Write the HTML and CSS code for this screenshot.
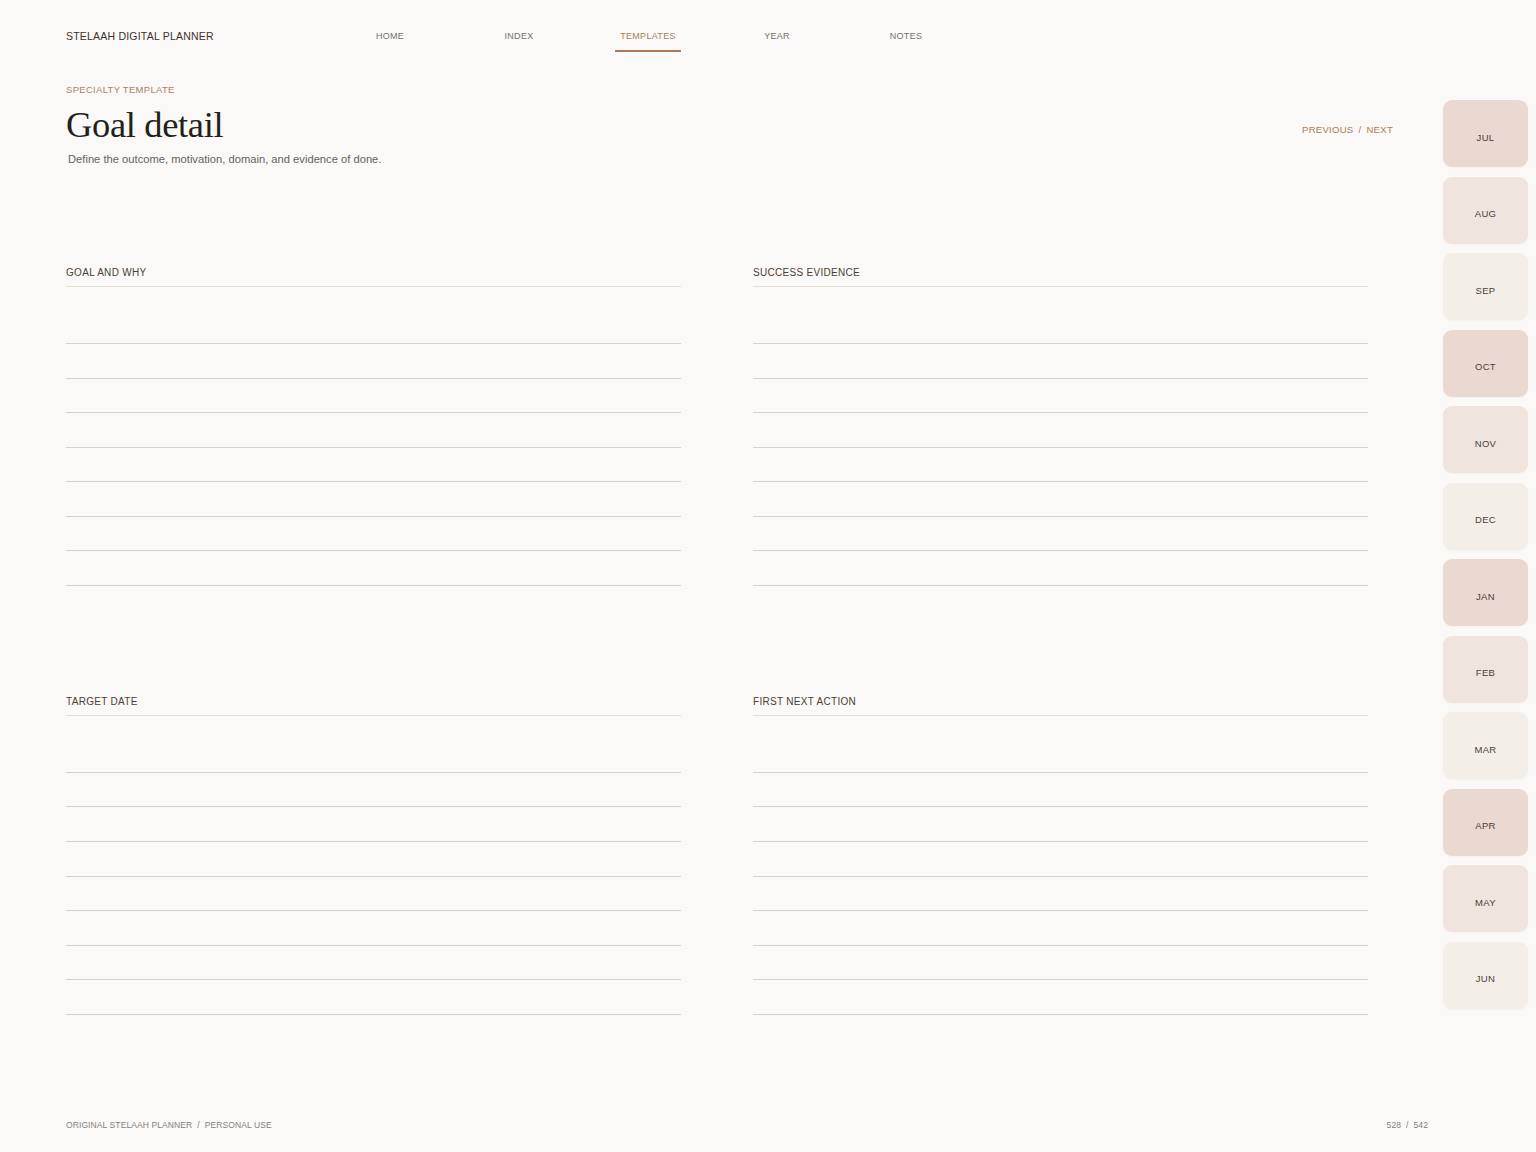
FILE: index.html
```html
<!DOCTYPE html>
<html lang="en">
<head>
<meta charset="utf-8">
<title>Goal detail — Stelaah Digital Planner</title>
<link rel="stylesheet" href="styles.css">
</head>
<body>
<div class="page">
  <main class="main">
    <header class="topbar">
      <div class="brand">STELAAH DIGITAL PLANNER</div>
      <nav class="nav">
        <a class="nav-link">HOME</a>
        <a class="nav-link">INDEX</a>
        <a class="nav-link active">TEMPLATES</a>
        <a class="nav-link">YEAR</a>
        <a class="nav-link">NOTES</a>
      </nav>
    </header>

    <section class="intro">
      <div class="intro-text">
        <div class="eyebrow">SPECIALTY TEMPLATE</div>
        <h1 class="title">Goal detail</h1>
        <p class="subtitle">Define the outcome, motivation, domain, and evidence of done.</p>
      </div>
      <div class="pager"><span>PREVIOUS</span><span class="sep">/</span><span>NEXT</span></div>
    </section>

    <section class="grid">
      <div class="block">
        <div class="block-label">GOAL AND WHY</div>
        <div class="lines">
          <div class="line"></div><div class="line"></div><div class="line"></div><div class="line"></div>
          <div class="line"></div><div class="line"></div><div class="line"></div><div class="line"></div>
        </div>
      </div>
      <div class="block">
        <div class="block-label">SUCCESS EVIDENCE</div>
        <div class="lines">
          <div class="line"></div><div class="line"></div><div class="line"></div><div class="line"></div>
          <div class="line"></div><div class="line"></div><div class="line"></div><div class="line"></div>
        </div>
      </div>
      <div class="block">
        <div class="block-label">TARGET DATE</div>
        <div class="lines">
          <div class="line"></div><div class="line"></div><div class="line"></div><div class="line"></div>
          <div class="line"></div><div class="line"></div><div class="line"></div><div class="line"></div>
        </div>
      </div>
      <div class="block">
        <div class="block-label">FIRST NEXT ACTION</div>
        <div class="lines">
          <div class="line"></div><div class="line"></div><div class="line"></div><div class="line"></div>
          <div class="line"></div><div class="line"></div><div class="line"></div><div class="line"></div>
        </div>
      </div>
    </section>

    <footer class="footer">
      <div>ORIGINAL STELAAH PLANNER<span class="sep">/</span>PERSONAL USE</div>
      <div>528<span class="sep">/</span>542</div>
    </footer>
  </main>

  <aside class="tabs">
    <a class="tab tone-a">JUL</a>
    <a class="tab tone-b">AUG</a>
    <a class="tab tone-c">SEP</a>
    <a class="tab tone-a">OCT</a>
    <a class="tab tone-b">NOV</a>
    <a class="tab tone-c">DEC</a>
    <a class="tab tone-a">JAN</a>
    <a class="tab tone-b">FEB</a>
    <a class="tab tone-c">MAR</a>
    <a class="tab tone-a">APR</a>
    <a class="tab tone-b">MAY</a>
    <a class="tab tone-c">JUN</a>
  </aside>
</div>
</body>
</html>
```

FILE: styles.css
```css
* { box-sizing: border-box; }

html, body {
  margin: 0;
  padding: 0;
  background: #fbf9f7;
}

body {
  font-family: "Liberation Sans", Arial, sans-serif;
  color: #3f3530;
}

.page {
  display: flex;
  width: 1536px;
  min-height: 1152px;
}

.main {
  width: 1443px;
  padding: 0 15px 0 66px;
  display: flex;
  flex-direction: column;
  min-height: 1152px;
}

/* top bar */
.topbar {
  display: flex;
  align-items: flex-start;
  padding-top: 30px;
}

.brand {
  font-size: 10.5px;
  line-height: 13px;
  letter-spacing: 0.02em;
  color: #3d322c;
  width: 259.5px;
}

.nav {
  display: grid;
  grid-template-columns: repeat(5, 129px);
  justify-items: center;
}

.nav-link {
  font-size: 9px;
  line-height: 13px;
  letter-spacing: 0.3px;
  color: #76706b;
  padding: 0 5px 7px;
  border-bottom: 2px solid transparent;
  text-decoration: none;
}

.nav-link.active {
  color: #a97c58;
  border-bottom-color: #a97c58;
}

/* intro */
.intro {
  display: flex;
  justify-content: space-between;
  align-items: flex-start;
  padding-right: 35px;
  margin-top: 31px;
}

.eyebrow {
  font-size: 9.5px;
  line-height: 13px;
  letter-spacing: 0.3px;
  color: #ad8360;
}

.title {
  margin: 6.5px 0 0;
  font-family: "Liberation Serif", "Times New Roman", serif;
  font-weight: 400;
  font-size: 36.5px;
  line-height: 44px;
  letter-spacing: -0.35px;
  color: #231f1c;
}

.subtitle {
  margin: 5.5px 0 0;
  padding-left: 2px;
  font-size: 11.2px;
  line-height: 14px;
  color: #67615c;
}

.pager {
  margin-top: 40px;
  font-size: 9.5px;
  line-height: 13px;
  letter-spacing: 0.3px;
  color: #a97c58;
}

.sep {
  margin: 0 5px;
}

/* grid of ruled blocks */
.grid {
  display: grid;
  grid-template-columns: 615px 615px;
  column-gap: 72px;
  row-gap: 109px;
  margin-top: 100px;
}

.block-label {
  font-size: 10px;
  line-height: 12px;
  letter-spacing: 0.3px;
  color: #4a3e36;
  padding: 1px 0 7px;
  border-bottom: 1px solid #e5ded7;
}

.lines {
  padding-top: 22.4px;
}

.line {
  height: 34.57px;
  border-bottom: 1px solid #d6d1cc;
}

/* footer */
.footer {
  margin-top: auto;
  padding-bottom: 21px;
  display: flex;
  justify-content: space-between;
  font-size: 8.5px;
  line-height: 12px;
  letter-spacing: 0.1px;
  color: #85807b;
}

.footer .sep {
  margin: 0 5px;
}

/* month tabs */
.tabs {
  display: flex;
  flex-direction: column;
  gap: 9.5px;
  padding-top: 100px;
  width: 85px;
}

.tab {
  height: 67px;
  border-radius: 9px;
  display: flex;
  align-items: center;
  justify-content: center;
  padding-top: 7px;
  font-size: 9.5px;
  letter-spacing: 0.3px;
  color: #4a3f38;
  text-decoration: none;
  box-shadow: 0 1px 2px rgba(120, 90, 70, 0.05);
}

.tone-a { background: #e9d9d0; }
.tone-b { background: #f0e4de; }
.tone-c { background: #f3eee8; }
```
